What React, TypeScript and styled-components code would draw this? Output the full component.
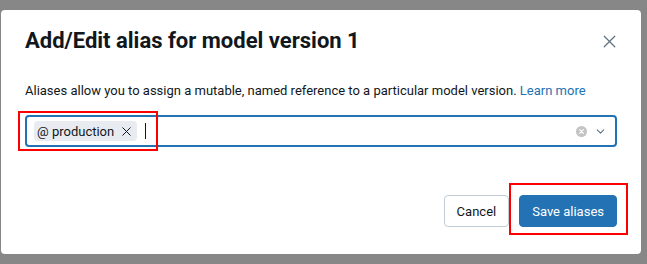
import React from "react";
import styled, { createGlobalStyle } from "styled-components";
import { X, ChevronDown } from "lucide-react";

const GlobalStyle = createGlobalStyle`
  html, body {
    margin: 0;
    padding: 0;
    background: #878787;
  }
  body {
    font-family: Roboto, "Liberation Sans", Arial, sans-serif;
    color: #11171c;
    -webkit-font-smoothing: antialiased;
  }
`;

export default function App() {
  return (
    <>
      <GlobalStyle />
      <Overlay>
        <Modal role="dialog" aria-labelledby="alias-title">
          <Header>
            <Title id="alias-title">Add/Edit alias for model version 1</Title>
            <CloseButton type="button" aria-label="Close">
              <X size={21} strokeWidth={1.4} />
            </CloseButton>
          </Header>
          <Body>
            <Description>
              Aliases allow you to assign a mutable, named reference to a particular model
              version. <Link href="#">Learn more</Link>
            </Description>
            <SelectBox>
              <Tag>
                @ production
                <TagRemove aria-label="Remove production">
                  <X size={15} strokeWidth={1.6} />
                </TagRemove>
              </Tag>
              <Caret />
              <Suffix>
                <ClearIcon aria-label="Clear">
                  <svg width="11" height="11" viewBox="0 0 12 12">
                    <circle cx="6" cy="6" r="6" fill="#c3c3c3" />
                    <path d="M4 4l4 4M8 4l-4 4" stroke="#fff" strokeWidth="1.3" strokeLinecap="round" />
                  </svg>
                </ClearIcon>
                <ChevronDown size={13} strokeWidth={2} color="#5f7281" />
              </Suffix>
              <Highlight $top={-6} $left={-9} $width={140} $height={40} />
            </SelectBox>
          </Body>
          <Footer>
            <Button type="button">Cancel</Button>
            <Button type="button" $primary>
              Save aliases
            </Button>
            <Highlight $top={-12} $right={-11} $width={119} $height={52} />
          </Footer>
        </Modal>
      </Overlay>
    </>
  );
}

const Overlay = styled.div`
  width: 647px;
  height: 264px;
  padding: 10px 0 0 1px;
  box-sizing: border-box;
`;

const Modal = styled.div`
  width: 640px;
  height: 244px;
  box-sizing: border-box;
  background: #ffffff;
  border-radius: 4px;
  display: flex;
  flex-direction: column;
  padding: 0 24px;
`;

const Header = styled.div`
  display: flex;
  align-items: center;
  justify-content: space-between;
  padding-top: 18px;
  height: 26px;
`;

const Title = styled.h2`
  margin: 0;
  font-size: 22px;
  font-weight: 700;
  line-height: 26px;
  color: #11171c;
`;

const CloseButton = styled.button`
  display: flex;
  align-items: center;
  justify-content: center;
  width: 24px;
  height: 24px;
  margin-right: -4px;
  padding: 0;
  border: 0;
  background: transparent;
  color: #5f7281;
`;

const Body = styled.div`
  display: flex;
  flex-direction: column;
  padding-top: 27px;
`;

const Description = styled.p`
  margin: 0;
  font-size: 13px;
  line-height: 20px;
  color: #11171c;
`;

const Link = styled.a`
  color: #2272b4;
  text-decoration: none;
`;

const SelectBox = styled.div`
  position: relative;
  display: flex;
  align-items: center;
  margin-top: 14px;
  height: 32px;
  box-sizing: border-box;
  border: 2px solid #2272b4;
  border-radius: 4px;
  padding: 0 8px 0 7px;
`;

const Tag = styled.span`
  display: inline-flex;
  align-items: center;
  gap: 5px;
  height: 20px;
  padding: 0 3px 0 3px;
  border-radius: 4px;
  background: #e8ecf0;
  font-size: 13px;
  color: #11171c;
`;

const TagRemove = styled.span`
  display: flex;
  align-items: center;
  color: #11171c;
`;

const Caret = styled.span`
  width: 1px;
  height: 16px;
  margin-left: 8px;
  background: #11171c;
`;

const Suffix = styled.div`
  margin-left: auto;
  display: flex;
  align-items: center;
  gap: 7px;
`;

const ClearIcon = styled.span`
  display: flex;
`;

const Footer = styled.div`
  position: relative;
  display: flex;
  justify-content: flex-end;
  gap: 10px;
  margin-top: 48px;
`;

const Button = styled.button<{ $primary?: boolean }>`
  height: 32px;
  padding: 0 12px;
  border-radius: 4px;
  font-family: Roboto, "Liberation Sans", Arial, sans-serif;
  font-size: 13px;
  border: 1px solid ${(p) => (p.$primary ? "#2272b4" : "#c0cdd8")};
  background: ${(p) => (p.$primary ? "#2272b4" : "#ffffff")};
  color: ${(p) => (p.$primary ? "#ffffff" : "#11171c")};
`;

const Highlight = styled.span<{
  $top: number;
  $left?: number;
  $right?: number;
  $width: number;
  $height: number;
}>`
  position: absolute;
  top: ${(p) => p.$top}px;
  ${(p) => (p.$left !== undefined ? `left: ${p.$left}px;` : "")}
  ${(p) => (p.$right !== undefined ? `right: ${p.$right}px;` : "")}
  width: ${(p) => p.$width}px;
  height: ${(p) => p.$height}px;
  box-sizing: border-box;
  border: 2px solid #ff0000;
  pointer-events: none;
`;
